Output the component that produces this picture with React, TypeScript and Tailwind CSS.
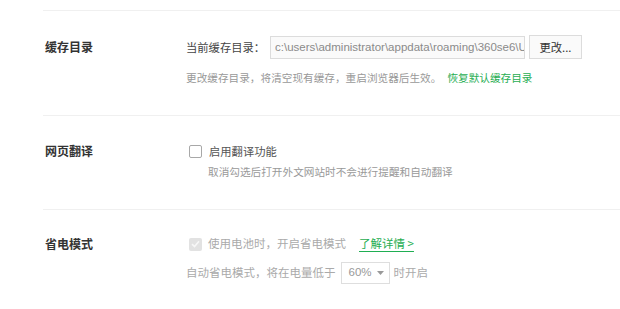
import React from 'react'

const font = { fontFamily: '"Noto Sans CJK SC", "Noto Sans", "Liberation Sans", sans-serif' }

function SettingRow({ label, className, children }: { label: string; className: string; children: React.ReactNode }) {
  return (
    <div className={`flex border-t border-[#f0f0f0] ${className}`}>
      <div className="w-[143px] shrink-0 pl-[2px]">
        <div className="flex h-[24px] items-center text-[12px] font-bold text-[#333]">{label}</div>
      </div>
      <div className="flex-1 min-w-0">{children}</div>
    </div>
  )
}

export default function App() {
  return (
    <div className="w-[620px] h-[309px] overflow-hidden bg-white" style={font}>
      <div className="pl-[43px] pt-[10px]">
        <SettingRow label="缓存目录" className="pt-[24px] pb-[28px]">
          <div className="flex h-[24px] items-center">
            <span className="text-[11.3px] text-[#444] w-[84px] shrink-0">当前缓存目录：</span>
            <input
              readOnly
              value="c:\users\administrator\appdata\roaming\360se6\User Data"
              className="h-[23px] w-[255px] border border-[#dcdcdc] bg-[#fafafa] pl-[4px] text-[11.5px] text-[#8a8a8a] outline-none"
              style={{ fontFamily: '"Liberation Sans", Arial, sans-serif' }}
            />
            <button className="ml-[4px] flex h-[24px] w-[53px] items-center justify-center border border-[#dcdcdc] bg-[#fafafa] text-[11.3px] text-[#333]">
              更改...
            </button>
          </div>
          <div className="mt-[10px] flex h-[18px] items-center text-[10.65px] text-[#999]">
            <span>更改缓存目录，将清空现有缓存，重启浏览器后生效。</span>
            <span className="ml-[6px] text-[#1fae52]">恢复默认缓存目录</span>
          </div>
        </SettingRow>

        <SettingRow label="网页翻译" className="pt-[23px] pb-[28px]">
          <div className="flex h-[24px] items-center">
            <span className="ml-[3px] h-[13px] w-[13px] rounded-[2px] border border-[#a8a8a8] bg-white" />
            <span className="ml-[7px] text-[11.3px] text-[#555]">启用翻译功能</span>
          </div>
          <div className="flex h-[18px] items-center pl-[22px] text-[10.65px] text-[#999]">
            取消勾选后打开外文网站时不会进行提醒和自动翻译
          </div>
        </SettingRow>

        <SettingRow label="省电模式" className="pt-[22px] pb-[30px]">
          <div className="flex h-[24px] items-center">
            <span className="ml-[3px] flex h-[13px] w-[13px] items-center justify-center rounded-[2px] bg-[#e2e2e2]">
              <svg width="9" height="8" viewBox="0 0 9 8">
                <path d="M1 4.2 L3.5 6.5 L8 1.2" fill="none" stroke="#f7f7f7" strokeWidth="1.6" />
              </svg>
            </span>
            <span className="ml-[6px] text-[11.5px] text-[#aaa]">使用电池时，开启省电模式</span>
            <span className="ml-[13px] text-[11.5px] text-[#1fae52] underline underline-offset-[3px]">了解详情 &gt;</span>
          </div>
          <div className="mt-[5px] flex h-[24px] items-center text-[11.5px] text-[#aaa]">
            <span>自动省电模式，将在电量低于</span>
            <div className="ml-[5px] flex h-[22px] w-[49px] items-center justify-between border border-[#dedede] bg-white pl-[7px] pr-[5px] text-[#999]">
              <span style={{ fontFamily: '"Liberation Sans", Arial, sans-serif' }}>60%</span>
              <svg width="7" height="4" viewBox="0 0 7 4">
                <path d="M0 0 L7 0 L3.5 4 Z" fill="#999" />
              </svg>
            </div>
            <span className="ml-[4px]">时开启</span>
          </div>
        </SettingRow>
      </div>
    </div>
  )
}
